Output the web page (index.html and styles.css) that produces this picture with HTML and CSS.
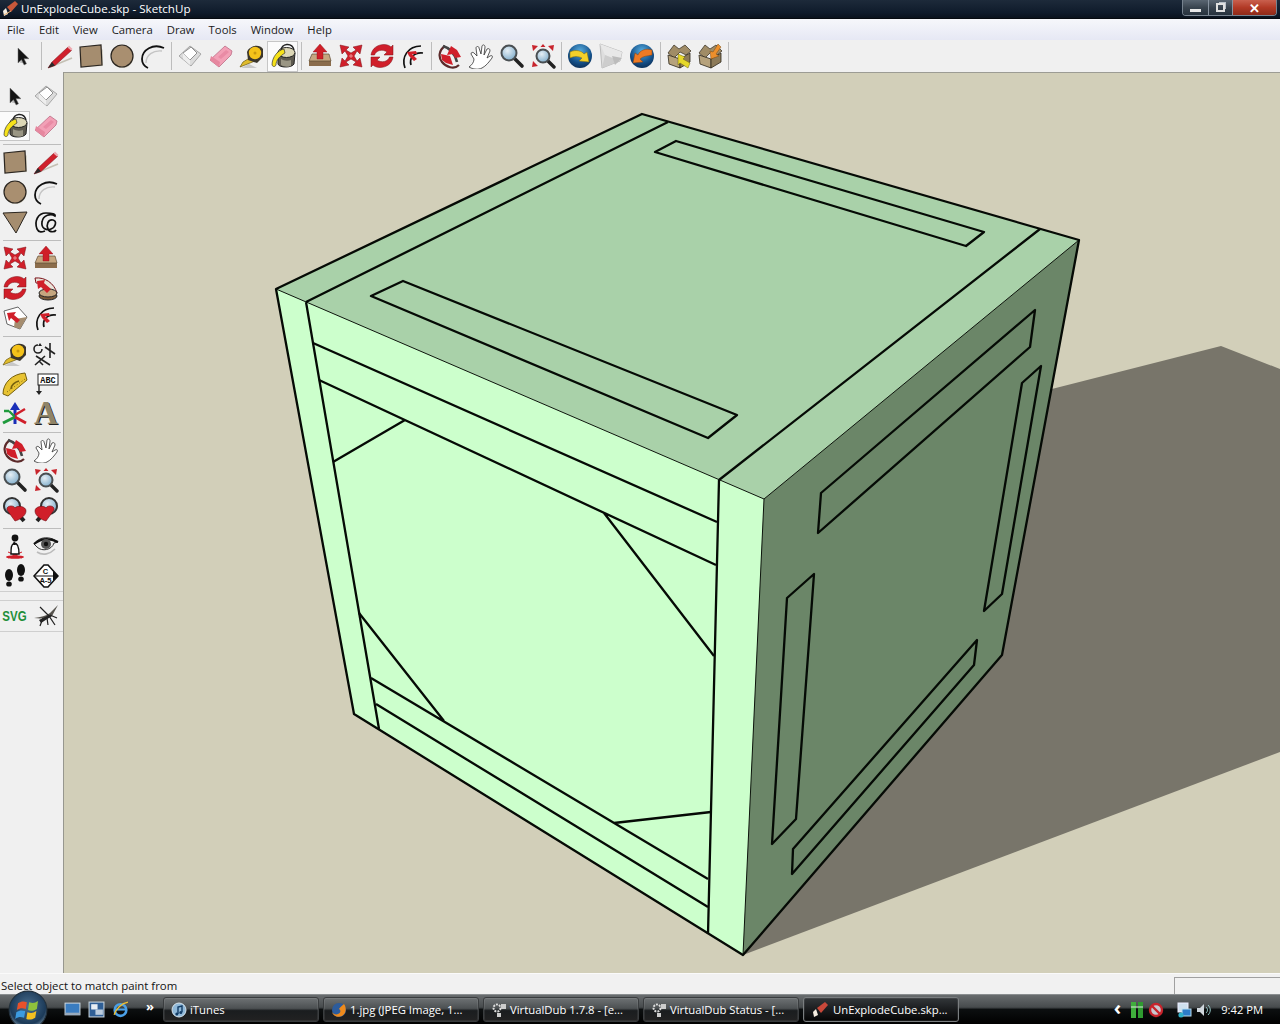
FILE: index.html
```html
<!DOCTYPE html>
<html lang="en">
<head>
<meta charset="utf-8">
<title>UnExplodeCube.skp - SketchUp</title>
<link rel="stylesheet" href="styles.css">
</head>
<body>
<svg class="defs" aria-hidden="true">
  <defs>
    <radialGradient id="g-lens" cx="0.4" cy="0.35" r="0.8"><stop offset="0" stop-color="#e6eff5"/><stop offset="1" stop-color="#6fa2c4"/></radialGradient>
    <radialGradient id="g-globe" cx="0.5" cy="0.3" r="0.8"><stop offset="0" stop-color="#58aee0"/><stop offset="0.6" stop-color="#145089"/><stop offset="1" stop-color="#0a2446"/></radialGradient>
    <radialGradient id="g-orb" cx="0.5" cy="0.4" r="0.65"><stop offset="0" stop-color="#4a6f90"/><stop offset="0.72" stop-color="#1c3a58"/><stop offset="1" stop-color="#8ea4b4"/></radialGradient>
    <symbol id="i-select" viewBox="0 0 26 26"><path d="M9.500 19.500l5 1-2-5z" fill="#bbb"/><path d="M8 5v15l3.500-3.300 2.600 5.300 2.400-1.200-2.500-5.100H19z" fill="#151515" stroke="#777" stroke-width=".5"/></symbol>
    <symbol id="i-pencil" viewBox="0 0 26 26"><path d="M3 24L25 15" stroke="#c4c0b4" stroke-width="1.800" fill="none"/><path d="M5 19L21 4l3.500 3.500L8 22.500 1 25z" fill="#d0202c" stroke="#7a1018" stroke-width=".5"/><path d="M1 25l4-6 3 3.500z" fill="#2a2a2a"/><path d="M20.500 4.500l1.500-2 3.500 3.500-1.500 1.500z" fill="#eda9b0"/></symbol>
    <symbol id="i-rect" viewBox="0 0 26 26"><path d="M5 24l20-1V6" fill="#cfcabb" opacity=".8"/><path d="M2 4l21-2 1 20-21 2z" fill="#a58d6f" stroke="#2b2620" stroke-width="1.200"/></symbol>
    <symbol id="i-circle" viewBox="0 0 26 26"><circle cx="13.500" cy="14" r="11" fill="#cfcabb"/><circle cx="13" cy="13" r="11" fill="#a98f70" stroke="#2b2620" stroke-width="1.200"/></symbol>
    <symbol id="i-arc" viewBox="0 0 26 26"><path d="M6 20C6 12 13 7 22 8" stroke="#c4c4c4" stroke-width="1.400" fill="none"/><path d="M24 5C13 0 2 7 2 16c0 4 2 7 6 9" stroke="#111" stroke-width="1.800" fill="none"/></symbol>
    <symbol id="i-poly" viewBox="0 0 26 26"><path d="M1 4l24-1-11 21z" fill="#a58d6f" stroke="#2b2620" stroke-width="1"/></symbol>
    <symbol id="i-free" viewBox="0 0 26 26"><path d="M4 20C1 12 5 4 13 4c6 0 10 1 9 3-4-3-12-1-13 6-1 6 4 9 9 7s6-8 2-9c-5-1-7 5-5 9 2 4 7 3 8 1M4 20c2 4 5 3 8 2" stroke="#111" stroke-width="1.700" fill="none"/></symbol>
    <symbol id="i-face" viewBox="0 0 26 26"><path d="M2 13L13 3l11 8-10 12z" fill="#dcdcdc" stroke="#a8a8a8"/><path d="M6 10l8-6 6 6-7 7z" fill="#fff" stroke="#8f8f8f"/><path d="M6 10v6l7 6v-5z" fill="#eee"/></symbol>
    <symbol id="i-eraser" viewBox="0 0 26 26"><path d="M2 17L17 3l7 5-1 4-12 12z" fill="#f2a0b6" stroke="#bd6f86" stroke-width=".8"/><path d="M2 17l9 7 1-5-9-6z" fill="#e6879f"/><path d="M10 14l8-7 3 2-8 7z" fill="#e98ba5"/></symbol>
    <symbol id="i-tape" viewBox="0 0 26 26"><path d="M2 25h16l-8-4z" fill="#c8c8c8"/><path d="M1 24l3-5 10-6 2 5z" fill="#e0bc2c" stroke="#6b5810" stroke-width=".7"/><path d="M8 9C10 3 20 0 24 6v8l-6 6-9-3z" fill="#3b362c"/><circle cx="16" cy="10" r="6.200" fill="#f4c21a"/><circle cx="16" cy="10" r="1.500" fill="#c8980f"/></symbol>
    <symbol id="i-paint" viewBox="0 0 26 26"><path d="M8 9v12c1 4 14 4 16 0l1-11z" fill="#5d5a4f" stroke="#222"/><path d="M11 16c3 2 7 2 10 1v6c-3 1-7 1-10-1z" fill="#9a9684"/><ellipse cx="16.500" cy="9.500" rx="8.500" ry="5" fill="#dcd7b6" stroke="#222"/><path d="M11 8C11 0 22-1 24 7" stroke="#222" stroke-width="1.500" fill="none"/><path d="M14 6C8 7 2 14 2 22c1 2 3 2 4 0 0-5 4-9 9-12z" fill="#f6e21a" stroke="#333" stroke-width=".7"/></symbol>
    <symbol id="i-push" viewBox="0 0 26 26"><path d="M2 18l3-7h17l2 7z" fill="#c5a67f"/><path d="M2 18h22v5H2z" fill="#8b6d4c"/><path d="M2 18l3-7h17l2 7z" fill="none" stroke="#5d4a33" stroke-width=".7"/><path d="M13 1l7 8h-4v7h-6V9H6z" fill="#cf1f28" stroke="#8b1218" stroke-width=".4"/></symbol>
    <symbol id="i-move" viewBox="0 0 26 26"><path d="M2 2l9 2-3 3 5 3 5-3-3-3 9-2-2 9-3-3-3 5 3 5 3-3 2 9-9-2 3-3-5-3-5 3 3 3-9 2 2-9 3 3 3-5-3-5-3 3z" fill="#d01f2a" stroke="#7d1117" stroke-width=".5"/><path d="M13 11v4M11 13h4" stroke="#f2a4a4" stroke-width=".8"/></symbol>
    <symbol id="i-rotate" viewBox="0 0 26 26"><path d="M2 12C3 5 9 1.500 15 1.500c3 0 5.500 1 7 2.500l2-2v10h-9l3-3c-4-3-11-2-12.500 3z" fill="#d01f2a" stroke="#7d1117" stroke-width=".5"/><path d="M2 12C3 5 9 1.500 15 1.500c3 0 5.500 1 7 2.500l2-2v10h-9l3-3c-4-3-11-2-12.500 3z" transform="rotate(180 13 13)" fill="#d01f2a" stroke="#7d1117" stroke-width=".5"/></symbol>
    <symbol id="i-offset" viewBox="0 0 26 26"><path d="M5 25C1 14 8 3 21 3M11 22c-2-7 3-13 12-12" stroke="#111" stroke-width="1.700" fill="none"/><path d="M7 9l9-1 1 3-5 0 5 5-3 2-5-5z" fill="#d01f2a"/></symbol>
    <symbol id="i-follow" viewBox="0 0 26 26"><path d="M2 3c10-1 19 5 22 15l-6 3C16 13 10 8 3 8z" fill="#e9e4da" stroke="#7a1018"/><ellipse cx="15" cy="21" rx="9" ry="4" fill="#7b5a38" stroke="#222"/><ellipse cx="15" cy="18" rx="9" ry="4" fill="#c5a67f" stroke="#222"/><path d="M4 6l8-1-1 3 7 6-4 4-6-6-3 2z" fill="#d01f2a"/></symbol>
    <symbol id="i-scale" viewBox="0 0 26 26"><path d="M2 6L16 2l9 10-7 12L5 19z" fill="#fff" stroke="#666"/><path d="M13 14l12-2-7 12-6-2z" fill="#a58d6f"/><path d="M5 8l9-1-2 3 6 5-3 3-6-5-2 3z" fill="#d01f2a"/></symbol>
    <symbol id="i-dims" viewBox="0 0 26 26"><path d="M5 4a4 4 0 1 0 4 4M17 2v15M12 6l10 7M3 15l14 9M2 24l10-9M6 20l4 4" stroke="#222" stroke-width="1.600" fill="none"/><path d="M7 2l2 3-4 0z" fill="#222"/></symbol>
    <symbol id="i-prot" viewBox="0 0 26 26"><path d="M1 23C1 12 10 3 23 2l2 7L6 25z" fill="#e8c332" stroke="#75600f"/><path d="M9 18c0-4 4-7 8-8" stroke="#75600f" fill="none" stroke-width="1.600"/><path d="M5 21l18-13" stroke="#75600f" stroke-dasharray="1 2"/></symbol>
    <symbol id="i-axes" viewBox="0 0 26 26"><path d="M13 23V7" stroke="#1a2fb8" stroke-width="3"/><path d="M13 1l5 8H8z" fill="#1a2fb8"/><path d="M1 22l12-6" stroke="#1f9a3c" stroke-width="3"/><path d="M13 16l-6-6M2 10l5 0" stroke="#1f9a3c" stroke-width="2.400"/><path d="M13 16l11 6" stroke="#d01f2a" stroke-width="3"/><path d="M13 14l10-6" stroke="#d01f2a" stroke-width="2.400"/></symbol>
    <symbol id="i-orbit" viewBox="0 0 26 26"><path d="M8 3C2 7 1 14 5 19s12 8 17 3" stroke="#5c2a2a" stroke-width="2.200" fill="none"/><path d="M6 3c7 2 12 8 14 16" stroke="#444" stroke-width="2.600" fill="none"/><path d="M14 3l6 4 4 7-6 1-2-4-6 1z" fill="#d01f2a"/><path d="M4 11l9 2 3 9-7-2-4-3z" fill="#d01f2a"/></symbol>
    <symbol id="i-hand" viewBox="0 0 26 26"><path d="M1 24c3-2 5-5 5-8L3 11c0-2 2-2 3-1l3 3-1-8c0-2 3-2 3 0l2 6 1-8c1-2 3-1 3 1l-1 8 3-6c2-1 3 0 3 2l-3 7 3-2c2-1 3 0 2 2-3 4-6 8-10 10-4 2-8 1-11 0z" fill="#fff" stroke="#333" stroke-width=".8"/></symbol>
    <symbol id="i-zoom" viewBox="0 0 26 26"><path d="M15 15l8 8" stroke="#222" stroke-width="3.600" stroke-linecap="round"/><circle cx="10" cy="10" r="7.500" fill="url(#g-lens)" stroke="#4a4f52" stroke-width="2"/></symbol>
    <symbol id="i-zoomx" viewBox="0 0 26 26"><path d="M17 17l7 7" stroke="#222" stroke-width="3.400" stroke-linecap="round"/><circle cx="13" cy="13" r="6.500" fill="url(#g-lens)" stroke="#4a4f52" stroke-width="2"/><path d="M2 2l6 1-5 5zM24 2l-1 6-5-5zM2 24l1-6 5 5zM13 1l2.500 3h-5z" fill="#c8242c"/></symbol>
    <symbol id="i-zoomw" viewBox="0 0 26 26"><circle cx="10" cy="9" r="8" fill="url(#g-lens)" stroke="#333" stroke-width="2"/><path d="M16 17l6 7" stroke="#222" stroke-width="4"/><path d="M5 13c-1-5 7-5 8-2 2-3 11-2 11 3 0 5-7 9-11 10z" fill="#d01f2a" stroke="#6d0e14" stroke-width=".6"/></symbol>
    <symbol id="i-zoomn" viewBox="0 0 26 26"><circle cx="16" cy="9" r="8" fill="url(#g-lens)" stroke="#333" stroke-width="2"/><path d="M10 17l-6 7" stroke="#222" stroke-width="4"/><path d="M21 13c1-5-7-5-8-2-2-3-11-2-11 3 0 5 7 9 11 10z" fill="#d01f2a" stroke="#6d0e14" stroke-width=".6"/></symbol>
    <symbol id="i-walk" viewBox="0 0 26 26"><ellipse cx="13" cy="24" rx="9" ry="1.800" fill="#d01f2a"/><path d="M6 19l14 6M20 19L6 25" stroke="#d01f2a"/><path d="M9 21c0-6 0-9 3-11 2 0 5 2 5 11z" fill="#fff" stroke="#111" stroke-width="1.400"/><circle cx="13" cy="5" r="3.400" fill="#111"/><path d="M12 8l-1 4h3z" fill="#111"/></symbol>
    <symbol id="i-look" viewBox="0 0 26 26"><path d="M1 11C6 3 18 3 25 9l-4 1C19 17 9 19 4 14z" fill="#eee" stroke="#333"/><path d="M1 11c7-6 16-6 24-2" stroke="#111" stroke-width="2.200" fill="none"/><circle cx="13" cy="11" r="5" fill="#555"/><circle cx="13" cy="11" r="2.200" fill="#111"/><path d="M4 19c6 4 13 2 18-3" stroke="#bbb" stroke-width="1.600" fill="none"/></symbol>
    <symbol id="i-steps" viewBox="0 0 26 26"><ellipse cx="7" cy="12" rx="4" ry="6" fill="#111"/><ellipse cx="7" cy="21" rx="2.800" ry="2.600" fill="#111"/><ellipse cx="19" cy="7" rx="4" ry="6" fill="#111"/><ellipse cx="19" cy="16" rx="2.800" ry="2.600" fill="#111"/></symbol>
    <symbol id="i-prev" viewBox="0 0 26 26"><circle cx="13" cy="13" r="12" fill="url(#g-globe)"/><path d="M3 9C9 6 15 8 17 11l3-2 2 10-10-1 3-3c-4-2-8-2-12 0z" fill="#f4d02a" stroke="#7a6710" stroke-width=".5"/></symbol>
    <symbol id="i-next" viewBox="0 0 26 26"><circle cx="13" cy="13" r="12" fill="url(#g-globe)"/><path d="M23 7C17 5 11 7 9 12l-3-2-2 10 10-1-3-3c3-3 7-3 12-4z" fill="#ee7a24" stroke="#88420f" stroke-width=".5"/></symbol>
    <symbol id="i-view" viewBox="0 0 26 26"><path d="M2 1l22 8-2 9L4 25z" fill="#dedede" stroke="#bcbcbc"/><path d="M2 1l5 11 15 6 2-9z" fill="#e8e8e8"/><path d="M7 12l-3 13 18-7z" fill="#cdcdcd"/><path d="M14 13l10 2-7 7z" fill="#bcbcbc"/></symbol>
    <symbol id="i-up" viewBox="0 0 26 26"><path d="M2 10L8 2l5 4 6-4 6 6-5 4-6-3-6 6z" fill="#a08c66" stroke="#2f281c" stroke-width=".7"/><path d="M2 12l12 4v9L3 21z" fill="#b6a27c" stroke="#2f281c" stroke-width=".8"/><path d="M14 16l10-6v9l-10 6z" fill="#8c7a58" stroke="#2f281c" stroke-width=".8"/><path d="M12 11l7 3-2 2 7 4-2 5-8-5-2 2z" fill="#e6d82a" stroke="#6b6310" stroke-width=".5"/></symbol>
    <symbol id="i-down" viewBox="0 0 26 26"><path d="M2 10L8 2l5 4 6-4 6 6-5 4-6-3-6 6z" fill="#a08c66" stroke="#2f281c" stroke-width=".7"/><path d="M2 12l12 4v9L3 21z" fill="#b6a27c" stroke="#2f281c" stroke-width=".8"/><path d="M14 16l10-6v9l-10 6z" fill="#8c7a58" stroke="#2f281c" stroke-width=".8"/><path d="M21 1l3 3-5 7 3 2-8 3-1-8 3 1z" fill="#ec8f2c" stroke="#7a4a12" stroke-width=".5"/></symbol>
    <symbol id="i-mosq" viewBox="0 0 26 26"><path d="M1 15c7-1 12-2 16-5l8-8-6 11c-4 2-10 3-18 2z" fill="#55524c"/><path d="M7 4l9 9 6 9M10 15l-3 8M14 15l1 7M17 12l7 3" stroke="#222" stroke-width="1.200" fill="none"/><path d="M6 17l10-5 3 1-11 7z" fill="#222"/></symbol>
  </defs>
</svg>

<div class="app">
  <header class="titlebar">
    <svg class="title-ic" viewBox="0 0 16 16"><path d="M1 10l3-3 2 6-4 2z" fill="#f4ede0"/><path d="M5 6l8-6 3 3-7 8z" fill="#c8583a"/><path d="M2 14l7-4" stroke="#e8b070"/></svg>
    <span class="title-text">UnExplodeCube.skp - SketchUp</span>
    <div class="winctl">
      <div class="wb wb-min"><span class="g-min"></span></div>
      <div class="wb wb-res"><span class="g-res"></span></div>
      <div class="wb wb-close">✕</div>
    </div>
  </header>

  <nav class="menubar">
    <span class="mi">File</span><span class="mi">Edit</span><span class="mi">View</span><span class="mi">Camera</span><span class="mi">Draw</span><span class="mi">Tools</span><span class="mi">Window</span><span class="mi">Help</span>
  </nav>

  <div class="toolbar">
    <div class="tb"><svg class="ic"><use href="#i-select"/></svg></div>
    <i class="sep"></i>
    <div class="tb"><svg class="ic"><use href="#i-pencil"/></svg></div>
    <div class="tb"><svg class="ic"><use href="#i-rect"/></svg></div>
    <div class="tb"><svg class="ic"><use href="#i-circle"/></svg></div>
    <div class="tb"><svg class="ic"><use href="#i-arc"/></svg></div>
    <i class="sep"></i>
    <div class="tb"><svg class="ic"><use href="#i-face"/></svg></div>
    <div class="tb"><svg class="ic"><use href="#i-eraser"/></svg></div>
    <div class="tb"><svg class="ic"><use href="#i-tape"/></svg></div>
    <div class="tb on"><svg class="ic"><use href="#i-paint"/></svg></div>
    <i class="sep"></i>
    <div class="tb"><svg class="ic"><use href="#i-push"/></svg></div>
    <div class="tb"><svg class="ic"><use href="#i-move"/></svg></div>
    <div class="tb"><svg class="ic"><use href="#i-rotate"/></svg></div>
    <div class="tb"><svg class="ic"><use href="#i-offset"/></svg></div>
    <i class="sep"></i>
    <div class="tb"><svg class="ic"><use href="#i-orbit"/></svg></div>
    <div class="tb"><svg class="ic"><use href="#i-hand"/></svg></div>
    <div class="tb"><svg class="ic"><use href="#i-zoom"/></svg></div>
    <div class="tb"><svg class="ic"><use href="#i-zoomx"/></svg></div>
    <i class="sep"></i>
    <div class="tb"><svg class="ic"><use href="#i-prev"/></svg></div>
    <div class="tb"><svg class="ic"><use href="#i-view"/></svg></div>
    <div class="tb"><svg class="ic"><use href="#i-next"/></svg></div>
    <i class="sep"></i>
    <div class="tb"><svg class="ic"><use href="#i-up"/></svg></div>
    <div class="tb"><svg class="ic"><use href="#i-down"/></svg></div>
    <i class="sep"></i>
  </div>

  <main class="main">
    <aside class="lefttools">
      <div class="lrow"><div class="tb"><svg class="ic"><use href="#i-select"/></svg></div><div class="tb"><svg class="ic"><use href="#i-face"/></svg></div></div>
      <div class="lrow"><div class="tb on"><svg class="ic"><use href="#i-paint"/></svg></div><div class="tb"><svg class="ic"><use href="#i-eraser"/></svg></div></div>
      <i class="hsep"></i>
      <div class="lrow"><div class="tb"><svg class="ic"><use href="#i-rect"/></svg></div><div class="tb"><svg class="ic"><use href="#i-pencil"/></svg></div></div>
      <div class="lrow"><div class="tb"><svg class="ic"><use href="#i-circle"/></svg></div><div class="tb"><svg class="ic"><use href="#i-arc"/></svg></div></div>
      <div class="lrow"><div class="tb"><svg class="ic"><use href="#i-poly"/></svg></div><div class="tb"><svg class="ic"><use href="#i-free"/></svg></div></div>
      <i class="hsep"></i>
      <div class="lrow"><div class="tb"><svg class="ic"><use href="#i-move"/></svg></div><div class="tb"><svg class="ic"><use href="#i-push"/></svg></div></div>
      <div class="lrow"><div class="tb"><svg class="ic"><use href="#i-rotate"/></svg></div><div class="tb"><svg class="ic"><use href="#i-follow"/></svg></div></div>
      <div class="lrow"><div class="tb"><svg class="ic"><use href="#i-scale"/></svg></div><div class="tb"><svg class="ic"><use href="#i-offset"/></svg></div></div>
      <i class="hsep"></i>
      <div class="lrow"><div class="tb"><svg class="ic"><use href="#i-tape"/></svg></div><div class="tb"><svg class="ic"><use href="#i-dims"/></svg></div></div>
      <div class="lrow"><div class="tb"><svg class="ic"><use href="#i-prot"/></svg></div><div class="tb"><svg class="ic" viewBox="0 0 26 26"><path d="M6 8v14" stroke="#222" stroke-width="1.400"/><path d="M3 20l3 4 3-4z" fill="#222"/><rect x="5" y="3" width="20" height="11" fill="#fff" stroke="#222"/><text class="abc" x="15" y="12" text-anchor="middle">ABC</text></svg></div></div>
      <div class="lrow"><div class="tb"><svg class="ic"><use href="#i-axes"/></svg></div><div class="tb"><svg class="ic ic-free" viewBox="0 0 26 26"><text class="a3d-b" x="14" y="24" text-anchor="middle">A</text><text class="a3d" x="13" y="23" text-anchor="middle">A</text></svg></div></div>
      <i class="hsep"></i>
      <div class="lrow"><div class="tb"><svg class="ic"><use href="#i-orbit"/></svg></div><div class="tb"><svg class="ic"><use href="#i-hand"/></svg></div></div>
      <div class="lrow"><div class="tb"><svg class="ic"><use href="#i-zoom"/></svg></div><div class="tb"><svg class="ic"><use href="#i-zoomx"/></svg></div></div>
      <div class="lrow"><div class="tb"><svg class="ic"><use href="#i-zoomw"/></svg></div><div class="tb"><svg class="ic"><use href="#i-zoomn"/></svg></div></div>
      <i class="hsep"></i>
      <div class="lrow"><div class="tb"><svg class="ic"><use href="#i-walk"/></svg></div><div class="tb"><svg class="ic"><use href="#i-look"/></svg></div></div>
      <div class="lrow"><div class="tb"><svg class="ic"><use href="#i-steps"/></svg></div><div class="tb"><svg class="ic" viewBox="0 0 26 26"><path d="M1 13L11 2h4l10 11-10 11h-4z" fill="#fff" stroke="#111" stroke-width="1.600"/><path d="M25 13l-5-5v10z" fill="#111"/><path d="M2 13h20" stroke="#111"/><text class="pos" x="12.500" y="11" text-anchor="middle">C</text><text class="pos" x="12.500" y="20" text-anchor="middle">A-5</text></svg></div></div>
      <i class="grip"></i>
      <div class="lrow"><div class="tb"><span class="svgtxt">SVG</span></div><div class="tb"><svg class="ic"><use href="#i-mosq"/></svg></div></div>
      <i class="endline"></i>
    </aside>

    <div class="canvas">
      <svg class="scene" viewBox="64 73 1216 900" role="img" aria-label="Cube model">
        <polygon class="shadow" points="1040,392 1221,346 1280,369 1280,752 743,955"/>
        <polygon class="top" points="276,289 642,114 1079,240 764,499"/>
        <polygon class="front" points="276,289 764,499 743,955 354,714"/>
        <polygon class="right" points="764,499 1079,240 1002,655 743,955"/>

        <path class="thin" d="M276 289L764 499L1079 240M764 499L743 955"/>
        <path class="edge" d="M276 289L642 114L1079 240L1002 655L743 955L354 714Z"/>

        <path class="edge" d="M306 302L668 122M719 480L1040 229M306 302L379 729M719 480L708 934"/>
        <polygon class="edge" points="371,296 403,281 737,415 708,438"/>
        <polygon class="edge" points="655,152 676,141 984,232 966,246"/>

        <path class="edge" d="M313 343L717 522M319 380L716 565M333 462L405 420M604 513L714 656"/>
        <path class="edge" d="M359 613L444 721M371 678L708 879M376 704L708 907M614 823L711 812"/>

        <polygon class="edge" points="821,493 1035,310 1030,347 818,533"/>
        <polygon class="edge" points="1022,383 1041,366 1002,594 984,611"/>
        <polygon class="edge" points="787,598 814,574 796,819 772,844"/>
        <polygon class="edge" points="793,849 977,640 974,665 792,874"/>
      </svg>
    </div>
  </main>

  <footer class="statusbar">
    <span class="status-text">Select object to match paint from</span>
    <div class="measure"></div>
  </footer>

  <div class="taskbar">
    <div class="orb">
      <svg viewBox="0 0 36 36"><circle cx="18" cy="18" r="17" fill="url(#g-orb)" stroke="#22303c"/><path d="M9 12c3-2 5-2 8-1l-1 6c-3-1-5-1-8 1z" fill="#e8512a"/><path d="M19 11c3 1 5 1 8-1l-1 7c-3 2-6 2-8 1z" fill="#8fc23c"/><path d="M7.500 20c3-2 5-2 8-1l-1 6c-3-1-5-1-8 1z" fill="#3c9be0"/><path d="M17.500 20c3 1 5 1 8-1l-1 6c-3 2-6 2-8 1z" fill="#f4c020"/></svg>
    </div>
    <div class="quick">
      <svg class="q-ic" viewBox="0 0 16 16"><rect x="1" y="2" width="14" height="11" fill="#3a7cc0" stroke="#c8d4de"/><rect x="1" y="11" width="14" height="2" fill="#9ab"/></svg>
      <svg class="q-ic" viewBox="0 0 16 16"><rect x="1" y="1" width="14" height="14" fill="#2f5f96" stroke="#c8d4de"/><rect x="3" y="3" width="6" height="5" fill="#e8eef4"/><rect x="7" y="8" width="7" height="5" fill="#bcd"/></svg>
      <svg class="q-ic" viewBox="0 0 16 16"><circle cx="8" cy="8.500" r="5.500" fill="none" stroke="#4aa0e8" stroke-width="2.400"/><path d="M3 8h10" stroke="#4aa0e8" stroke-width="2"/><path d="M2 13C4 7 9 2 15 1" stroke="#f0c030" stroke-width="1.300" fill="none"/></svg>
      <span class="more">»</span>
    </div>
    <div class="tasks">
      <div class="task"><svg class="t-ic" viewBox="0 0 16 16"><circle cx="8" cy="8" r="7" fill="#8fb8d8" stroke="#d8e4ec"/><path d="M7 12V5l4-1v6" stroke="#123c66" stroke-width="1.400" fill="none"/><circle cx="5.800" cy="12" r="1.500" fill="#123c66"/><circle cx="9.800" cy="10.500" r="1.500" fill="#123c66"/></svg><span>iTunes</span></div>
      <div class="task"><svg class="t-ic" viewBox="0 0 16 16"><circle cx="8" cy="8" r="7" fill="#2d5c9c"/><path d="M13 2c3 4 2 10-2 12-4 2-9 0-10-4 1 2 4 3 6 2 3-1 3-4 1-5 1-2 3-3 5-5z" fill="#ee8a1c"/></svg><span>1.jpg (JPEG Image, 1...</span></div>
      <div class="task"><svg class="t-ic" viewBox="0 0 16 16"><circle cx="6" cy="6" r="3.500" fill="none" stroke="#ddd" stroke-width="2" stroke-dasharray="2 1"/><rect x="10" y="2" width="5" height="5" fill="#ccc"/><rect x="6" y="11" width="4" height="4" fill="#ccc"/></svg><span>VirtualDub 1.7.8 - [e...</span></div>
      <div class="task"><svg class="t-ic" viewBox="0 0 16 16"><circle cx="6" cy="6" r="3.500" fill="none" stroke="#ddd" stroke-width="2" stroke-dasharray="2 1"/><rect x="10" y="2" width="5" height="5" fill="#ccc"/><rect x="6" y="11" width="4" height="4" fill="#ccc"/></svg><span>VirtualDub Status - [...</span></div>
      <div class="task task-on"><svg class="t-ic" viewBox="0 0 16 16"><path d="M1 10l3-3 2 6-4 2z" fill="#f4ede0"/><path d="M5 6l8-6 3 3-7 8z" fill="#c8483a"/></svg><span>UnExplodeCube.skp...</span></div>
    </div>
    <div class="tray">
      <span class="tray-arrow">‹</span>
      <svg class="tr-ic" viewBox="0 0 16 16"><rect x="2" y="0" width="5" height="16" fill="#3fae3c"/><rect x="9" y="0" width="5" height="16" fill="#2f9a30"/><path d="M2 5h12" stroke="#d8f0d8"/></svg>
      <svg class="tr-ic" viewBox="0 0 16 16"><circle cx="8" cy="8" r="6" fill="#c8c8d0" stroke="#c8242c" stroke-width="2.400"/><path d="M3.500 3.500l9 9" stroke="#c8242c" stroke-width="2.400"/></svg>
      <svg class="tr-ic tr-net" viewBox="0 0 16 16"><rect x="2" y="1" width="10" height="9" fill="#cfe0ee" stroke="#eef"/><rect x="6" y="7" width="9" height="7" fill="#2d7cc8" stroke="#bde"/><circle cx="5" cy="13" r="2.600" fill="#2fb0c8"/></svg>
      <svg class="tr-ic" viewBox="0 0 16 16"><path d="M2 6h3l4-4v12l-4-4H2z" fill="#cfd6dc"/><path d="M11 5c2 2 2 4 0 6M13 3c3 3 3 7 0 10" stroke="#9cc" fill="none"/></svg>
      <span class="clock">9:42 PM</span>
    </div>
  </div>
</div>
</body>
</html>
```

FILE: styles.css
```css
* { box-sizing: border-box; }
html, body { margin: 0; height: 100%; overflow: hidden; }
body { font-family: "Open Sans", "Noto Sans", "Liberation Sans", sans-serif; font-size: 12px; color: #111; background: #f0f0f0; }
.defs { display: block; width: 0; height: 0; }
.app { display: flex; flex-direction: column; height: 1024px; width: 1280px; overflow: hidden; }

.titlebar { height: 19px; display: flex; align-items: center; padding-left: 2px; color: #fff; background: linear-gradient(#1d2a3a, #0f1b2b 70%, #0a121d); border-bottom: 1px solid #060a10; flex: none; }
.title-ic { width: 16px; height: 16px; flex: none; }
.title-text { margin-left: 3px; font-size: 11.600px; line-height: 20px; white-space: nowrap; }
.winctl { margin-left: auto; margin-right: 3px; display: flex; height: 16px; align-self: flex-start; border: 1px solid #77838f; border-top: 0; border-radius: 0 0 4px 4px; overflow: hidden; }
.wb { height: 15px; display: flex; align-items: center; justify-content: center; color: #fff; background: linear-gradient(#5a6672, #39444f 50%, #27323d); border-right: 1px solid #8893a0; }
.wb-min { width: 26px; }
.wb-res { width: 24px; }
.wb-close { width: 43px; border-right: 0; font-size: 13px; font-weight: 700; background: linear-gradient(#c9604e, #b23a26 50%, #8f2a18); }
.g-min { width: 11px; height: 3px; margin-top: 5px; background: #e8e8e8; }
.g-res { width: 9px; height: 9px; border: 2px solid #e0e0e0; box-shadow: 2px -2px 0 -1px #b8c0c8; }

.menubar { height: 21px; display: flex; align-items: center; flex: none; background: linear-gradient(#f6f7fb, #e6e8f4); }
.mi { padding: 0 7px; font-size: 11.300px; line-height: 20px; color: #1a1a1a; }

.toolbar { height: 32px; display: flex; align-items: center; padding-left: 7px; background: #f0f0f0; flex: none; }
.tb { width: 31px; height: 30px; display: flex; align-items: center; justify-content: center; flex: none; }
.toolbar .tb { height: 31px; }
.tb.on { background: #fbfbfb; border: 1px solid #c6c6c6; }
.ic { width: 26px; height: 26px; display: block; }
.ic-free { overflow: visible; }
.sep { width: 6px; height: 28px; flex: none; background: linear-gradient(#bdbdbd, #bdbdbd) center / 1px 100% no-repeat; }

.main { height: 901px; display: flex; flex: none; }
.lefttools { width: 64px; flex: none; padding-top: 9px; background: #f0f0f0; border-right: 1px solid #97978f; }
.lrow { display: flex; height: 30px; margin-left: -1px; }
.hsep { display: block; height: 6px; background: linear-gradient(#bdbdbd, #bdbdbd) center / 58px 1px no-repeat; }
.grip { display: block; height: 10px; border-top: 1px solid #cfcfcf; border-bottom: 1px solid #cfcfcf; }
.endline { display: block; height: 1px; background: #cfcfcf; }
.svgtxt { display: inline-block; font-family: "Liberation Sans", sans-serif; font-size: 11.500px; font-weight: 700; color: #1f8f3a; transform: scaleY(1.300); }
.abc { font-family: "Liberation Mono", monospace; font-size: 8.500px; font-weight: 700; fill: #111; }
.a3d { font-family: "Liberation Serif", serif; font-size: 33px; font-weight: 700; fill: #8f8468; }
.a3d-b { font-family: "Liberation Serif", serif; font-size: 33px; font-weight: 700; fill: #222; }
.pos { font-family: "Liberation Sans", sans-serif; font-size: 7.500px; font-weight: 700; fill: #111; }

.canvas { flex: 1; border-top: 1px solid #9c9c94; background: #d2cfb9; }
.scene { display: block; width: 1216px; height: 900px; }
.shadow { fill: #78756a; }
.top { fill: #a9d1a9; }
.front { fill: #ccffcc; }
.right { fill: #6b8668; }
.edge { fill: none; stroke: #050a05; stroke-width: 2.300; stroke-linejoin: round; }
.thin { fill: none; stroke: #0c140c; stroke-width: 1; }

.statusbar { height: 21px; display: flex; align-items: flex-end; flex: none; background: #f1f1f1; border-top: 1px solid #fafafa; }
.status-text { padding-left: 1px; font-size: 11.400px; line-height: 17px; white-space: nowrap; color: #111; }
.measure { margin-left: auto; width: 106px; height: 17px; border-top: 1px solid #a0a0a0; border-left: 1px solid #a0a0a0; }

.taskbar { height: 30px; flex: none; display: flex; align-items: flex-start; position: relative; color: #fff; background: linear-gradient(#686c6e, #474b4d 42%, #0c0f10 50%, #000); border-top: 1px solid #8a8e90; padding: 2px 0 0 62px; }
.orb { position: absolute; left: 8px; top: -5px; width: 40px; height: 40px; }
.orb svg { display: block; width: 40px; height: 40px; }
.quick { display: flex; align-items: center; gap: 7px; width: 101px; height: 25px; flex: none; padding-left: 2px; }
.q-ic { width: 17px; height: 17px; flex: none; }
.more { font-size: 13px; font-weight: 700; margin: -8px 0 0 10px; }
.tasks { display: flex; gap: 4px; align-items: center; flex: none; }
.task { width: 156px; height: 25px; display: flex; align-items: center; gap: 3px; padding-left: 7px; font-size: 11.300px; white-space: nowrap; border: 1px solid #3a3d3f; border-radius: 3px; background: linear-gradient(#6e7274, #4c5052 45%, #1a1d1f 55%, #222); box-shadow: inset 0 0 0 1px rgba(255, 255, 255, .08); }
.task-on { padding-left: 8px; gap: 5px; background: linear-gradient(#33373a, #1a1c1e 50%, #050505); border-color: #7a7e80; }
.t-ic { width: 16px; height: 16px; flex: none; }
.tray { margin-left: auto; display: flex; align-items: center; height: 25px; padding-right: 17px; }
.tray-arrow { font-size: 20px; font-weight: 700; line-height: 20px; margin: -4px 8px 0 0; }
.tr-ic { width: 16px; height: 16px; flex: none; margin-right: 3px; }
.tr-net { margin-left: 9px; }
.clock { margin-left: 7px; font-size: 11.200px; white-space: nowrap; }
```
